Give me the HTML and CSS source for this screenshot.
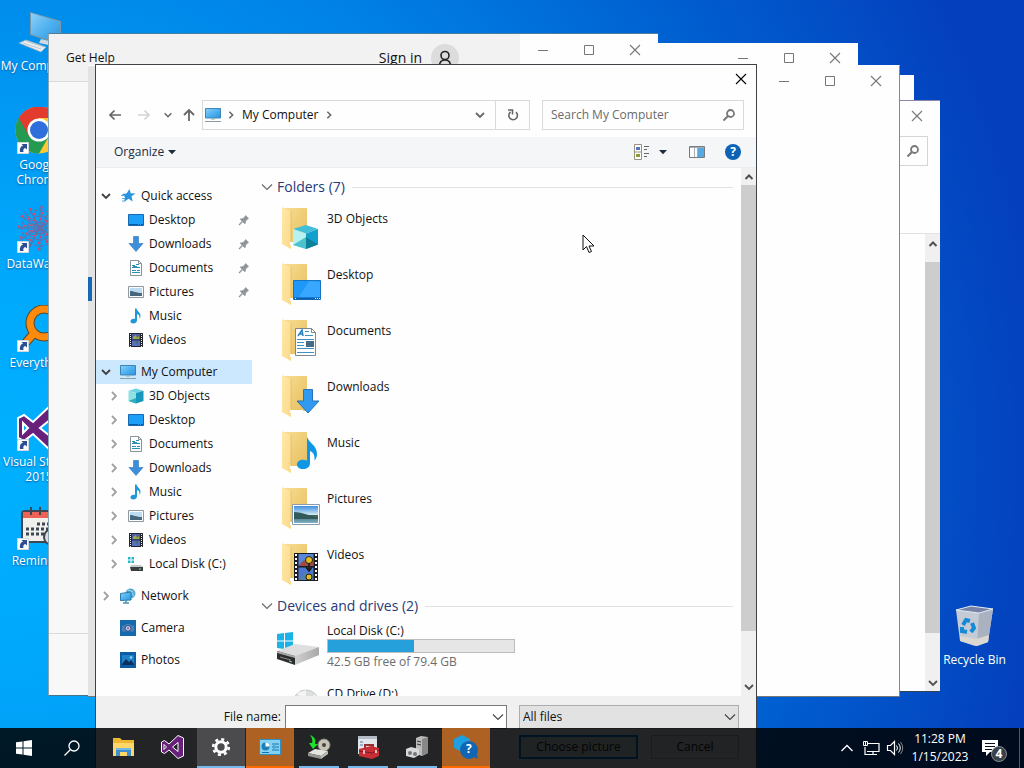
FILE: index.html
```html
<!DOCTYPE html>
<html lang="en">
<head>
<meta charset="utf-8">
<title>Desktop</title>
<link rel="stylesheet" href="styles.css">
</head>
<body>
<svg class="defs" aria-hidden="true">
  <defs>
    <linearGradient id="g-screen" x1="0" y1="0" x2="1" y2="1"><stop offset="0" stop-color="#8fd0f8"/><stop offset=".5" stop-color="#4fb2f0"/><stop offset="1" stop-color="#2c93dc"/></linearGradient>
    <linearGradient id="g-back" x1="0" y1="0" x2="1" y2="1"><stop offset="0" stop-color="#f8df92"/><stop offset="1" stop-color="#e6bd60"/></linearGradient>
    <linearGradient id="g-front" x1="0" y1="0" x2="1" y2="1"><stop offset="0" stop-color="#ffe9a8"/><stop offset="1" stop-color="#fbd98a"/></linearGradient>
    <linearGradient id="g-photo" x1="0" y1="0" x2="0" y2="1"><stop offset="0" stop-color="#3f8fdf"/><stop offset=".5" stop-color="#cfe7f5"/><stop offset=".55" stop-color="#3c6657"/><stop offset="1" stop-color="#7fb3cf"/></linearGradient>
    <linearGradient id="g-drive" x1="0" y1="0" x2="1" y2="0"><stop offset="0" stop-color="#cfcfcf"/><stop offset="1" stop-color="#a9a9a9"/></linearGradient>
  </defs>
  <symbol id="close" viewBox="0 0 12 12"><path d="M1 1l10 10M11 1L1 11" fill="none" stroke="currentColor" stroke-width="1.1"/></symbol>
  <symbol id="max" viewBox="0 0 12 12"><path d="M1.500 1.500h9v9h-9z" fill="none" stroke="currentColor"/></symbol>
  <symbol id="min" viewBox="0 0 12 12"><path d="M1 6.500h10" fill="none" stroke="currentColor"/></symbol>
  <symbol id="down" viewBox="0 0 12 12"><path d="M2 4l4 4 4-4" fill="none" stroke="currentColor" stroke-width="1.800"/></symbol>
  <symbol id="thin-down" viewBox="0 0 12 12"><path d="M1 3.500l5 5 5-5" fill="none" stroke="currentColor" stroke-width="1.100"/></symbol>
  <symbol id="up" viewBox="0 0 12 12"><path d="M2.500 8L6 4.500 9.500 8" fill="none" stroke="currentColor" stroke-width="2"/></symbol>
  <symbol id="right" viewBox="0 0 12 12"><path d="M4 2l4 4-4 4" fill="none" stroke="currentColor" stroke-width="1.800"/></symbol>
  <symbol id="caret" viewBox="0 0 12 12"><path d="M2 4h8L6 8.300z" fill="currentColor"/></symbol>
  <symbol id="arrow-l" viewBox="0 0 14 14"><path d="M13 7H2M6.500 2.500L2 7l4.500 4.500" fill="none" stroke="currentColor" stroke-width="1.700"/></symbol>
  <symbol id="arrow-r" viewBox="0 0 14 14"><path d="M1 7h11M7.500 2.500L12 7l-4.500 4.500" fill="none" stroke="currentColor" stroke-width="1.700"/></symbol>
  <symbol id="arrow-u" viewBox="0 0 14 14"><path d="M7 13V2M2 7l5-5 5 5" fill="none" stroke="currentColor" stroke-width="1.800"/></symbol>
  <symbol id="refresh" viewBox="0 0 14 14"><path d="M10 4.200A4.300 4.300 0 1 1 4.500 4" fill="none" stroke="currentColor" stroke-width="1.600"/><path d="M2 2h4.500v4.500" fill="none" stroke="currentColor" stroke-width="1.600"/></symbol>
  <symbol id="search" viewBox="0 0 14 14"><circle cx="8.500" cy="5.500" r="3.500" fill="none" stroke="currentColor" stroke-width="1.800"/><path d="M6 8l-4.500 4.500" stroke="currentColor" stroke-width="2"/></symbol>
  <symbol id="pin" viewBox="0 0 12 12"><path d="M7.500 1L11 4.500 9.800 5.200 8 7l-.3 2.500-1 .5L2 5.500l.6-1L5 4.200 6.800 2.300z" fill="#8f969d"/><path d="M4.500 7.500L1 11" stroke="#8f969d" stroke-width="1.200"/></symbol>

  <symbol id="pc" viewBox="0 0 16 16"><path d="M.5 1.500h15v9.500H.5z" fill="url(#g-screen)" stroke="#3a86ba"/><path d="M6 11.500h4v1H6z" fill="#8aa"/><path d="M0 14.500h16" stroke="#8b9aa5"/></symbol>
  <symbol id="star" viewBox="0 0 16 16"><path d="M9.500 1l1.200 4.200 4.800.3-4 2.800 1.200 5.200-4.200-2.800L4 14l1-4.700L2 6l4.500-.4z" fill="#2a93e0"/><path d="M1 7.500h4M2 10.500h3M2 13h3" stroke="#5aaee8"/></symbol>
  <symbol id="desk" viewBox="0 0 16 16"><path d="M.5 2.500h15v11H.5z" fill="#1fa0f8" stroke="#1669ab"/><path d="M1 12.500h14" stroke="#0a5ba5" stroke-dasharray="9 1 1 1"/></symbol>
  <symbol id="dl" viewBox="0 0 16 16"><path d="M5.500.5h5v7h4.500L8 15.500 1 7.500h4.500z" fill="#3c8fd8" stroke="#2c74b8" stroke-width=".6"/></symbol>
  <symbol id="doc" viewBox="0 0 16 16"><path d="M2.500.5h8l3 3v12h-11z" fill="#fff" stroke="#8b9299"/><path d="M4 5.500h3M8 4.500h3M4 7.500h8M4 10.500h4M9 10.500h3M4 12.500h8M5 6.500h4" stroke="#2e8fb5"/><path d="M10.500.5v3h3" fill="none" stroke="#8b9299"/></symbol>
  <symbol id="pic" viewBox="0 0 16 16"><path d="M.5 2.500h15v11H.5z" fill="#fff" stroke="#8d98a3"/><path d="M2 4h12v8H2z" fill="#bcdcf2"/><path d="M2 7c4 0 6 2 12 2v3H2z" fill="#48667e"/></symbol>
  <symbol id="music" viewBox="0 0 16 16"><path d="M7 .5h1.500c.5 3 4.500 4 4 8-.1 1-.6 1.800-1 2 .4-3-1-4-2.500-4.500V12c0 2-1.500 3.500-3.500 3.500S2.500 14.500 2.500 13.200c0-1.700 2-2.700 4.500-2.200z" fill="#1f97d8"/></symbol>
  <symbol id="video" viewBox="0 0 16 16"><path d="M1 1h14v14H1z" fill="#22252b"/><path d="M4 2h8v5.500H4z" fill="#4c62a8"/><path d="M4 8.500h8V14H4z" fill="#5870bd"/><path d="M5 5l3-2 1 3 2-2v3H5z" fill="#a3a944"/><path d="M7 10l3-1v4z" fill="#3d7358"/><path d="M2.500 2v13M13.500 2v13" stroke="#eee" stroke-dasharray="1 1"/></symbol>
  <symbol id="cube" viewBox="0 0 16 16"><path d="M8 .5l7.500 2.300L8 5 .5 2.800z" fill="#6ed3e2"/><path d="M.5 2.800L8 5v10.500L.5 13z" fill="#8fe0e0"/><path d="M8 5l7.500-2.200V13L8 15.500z" fill="#1697bd"/><path d="M.5 13L8 10v5.500z" fill="#2fadb8"/></symbol>
  <symbol id="disk" viewBox="0 0 16 16"><path d="M0 1h2.500v2.500H0zM3.500 1H6v2.500H3.500zM0 4.500h2.500V7H0zM3.500 4.500H6V7H3.500z" fill="#26b8c8"/><path d="M3 9h10l2 2H2z" fill="#c5c9cb"/><path d="M2 11h13v4H3z" fill="#3a3d40"/><path d="M11 13h2" stroke="#8ee08e"/></symbol>
  <symbol id="net" viewBox="0 0 16 16"><circle cx="10.500" cy="5.500" r="5" fill="#58a9d4"/><path d="M8 2l3 1 3 5M7 6l6-3" stroke="#a5d9ec" fill="none"/><path d="M.5 5.500L11 4v8L.5 12.500z" fill="url(#g-screen)" stroke="#257bab"/><path d="M3 15h6M6 12v3" stroke="#4c91b5" stroke-width="1.500"/></symbol>
  <symbol id="cam" viewBox="0 0 16 16"><path d="M0 0h16v16H0z" fill="#1769ae"/><path d="M2 5.500h3l1-1.500h4l1 1.500h3v6H2z" fill="#4f80b2"/><circle cx="8" cy="8.300" r="2.800" fill="#b9d4f1" stroke="#324a89"/><circle cx="8" cy="8.300" r="1" fill="#9b4c7b"/></symbol>
  <symbol id="photos" viewBox="0 0 16 16"><path d="M0 0h16v16H0z" fill="#0c5ca5"/><path d="M2 3h12v10H2z" fill="#1e82ca"/><path d="M2 12l4-5 3 3 2-2 3 4v1H2z" fill="#0b315b"/><circle cx="11" cy="5.500" r="1.300" fill="#92d4fa"/></symbol>

  <symbol id="folder" viewBox="0 0 48 48"><path d="M7 5h25v35H7z" fill="url(#g-back)"/><path d="M7 4l9 4v38l-9-5z" fill="url(#g-front)"/><path d="M16 8v32" stroke="#dfb65c" stroke-width=".7"/><path d="M15 39h13v3H15z" fill="#fff"/></symbol>
  <symbol id="o-cube" viewBox="0 0 48 48"><use href="#folder"/><path d="M31 22l12 4-12 4.500L18 26z" fill="#42bfd8"/><path d="M18 26l13 4.500V46l-13-4z" fill="#b8f2ee"/><path d="M31 30.500L43 26v15.500L31 46z" fill="#14a0cf"/><path d="M18 42l13-8v12z" fill="#4bc3cd"/><path d="M31 34l12 7.500L31 46z" fill="#0d8199"/></symbol>
  <symbol id="o-desk" viewBox="0 0 48 48"><use href="#folder"/><path d="M18.500 21.500h27v19h-27z" fill="#1e97f8" stroke="#1674c0"/><path d="M34 22l11 1v15H24z" fill="#38a7ff"/><path d="M19 39.500h26" stroke="#0d5fad" stroke-width="2"/><path d="M40 39.500h5M20 39.500h1" stroke="#fff" stroke-dasharray="1 1"/></symbol>
  <symbol id="o-doc" viewBox="0 0 48 48"><use href="#folder"/><path d="M20.500 13.500h16l4 4v23h-20z" fill="#fff" stroke="#7d8790"/><path d="M36.500 13.500v4h4" fill="none" stroke="#7d8790"/><path d="M23 21l4-6 1 6M24.500 19H28" stroke="#2a83c4" stroke-width="1.500" fill="none"/><path d="M30 16.500h4M30 20.500h8M22 24.500h17M22 27.500h7M22 30.500h7M22 33.500h17M22 37.500h17" stroke="#3f8fc2"/><path d="M31 26h8v6h-8z" fill="#456b87"/></symbol>
  <symbol id="o-dl" viewBox="0 0 48 48"><use href="#folder"/><path d="M28.500 18.500h9V30H44L33 42 22 30h6.500z" fill="#2f9af0" stroke="#2775ba"/></symbol>
  <symbol id="o-music" viewBox="0 0 48 48"><use href="#folder"/><path d="M32 10c2 6 10 8 10 17 0 3-1 5-2.500 6.500C40 28 38 25 35 24v12c0 4-3 6-7 6s-6-2-6-4.500c0-3.500 4.500-6 10-4z" fill="#0f97e4"/></symbol>
  <symbol id="o-pic" viewBox="0 0 48 48"><use href="#folder"/><path d="M17.500 21.500h27v20h-27z" fill="#fff" stroke="#8b9bab"/><path d="M19 23h24v17H19z" fill="url(#g-photo)"/><path d="M19 29c7 0 12 3 24 5v2H19z" fill="#325a5c"/></symbol>
  <symbol id="o-video" viewBox="0 0 48 48"><use href="#folder"/><path d="M19 14h24v28H19z" fill="#1c1d22"/><path d="M23.500 15h15v12h-15z" fill="#5a87de"/><path d="M23.500 28.500h15V41h-15z" fill="#4b76d2"/><path d="M24 26l5-5 4 3 5-5v8H24z" fill="#9e4a4a"/><path d="M24 40l6-7 4 4 4-3v7H24z" fill="#517fa6"/><circle cx="34" cy="21" r="3.500" fill="#e3be22" stroke="#26210c"/><circle cx="34" cy="38" r="3" fill="#e3be22" stroke="#26210c"/><path d="M34 24v8M31 28l3 4 3-4" stroke="#19190f" stroke-width="1.500" fill="none"/><path d="M21 15v27M41 15v27" stroke="#fff" stroke-width="2" stroke-dasharray="2 2"/></symbol>
  <symbol id="o-disk" viewBox="0 0 48 48"><path d="M2 11l7-1v7.500H2zM10 10l8-1v8.500h-8zM2 18.500h7V26l-7-1zM10 18.500h8V27l-8-1z" fill="#1bb2e8"/><path d="M2 28l18-7 24 3-23 9z" fill="#dedede"/><path d="M20 33l24-9v8l-24 10z" fill="url(#g-drive)"/><path d="M2 28l18 5v9L2 36z" fill="#2d2d2f"/><path d="M2 28l18 5v2L2 30z" fill="#a8a8a8"/><path d="M5 34l11 3" stroke="#888"/><path d="M14 38l3 1" stroke="#7fe08b"/></symbol>
  <symbol id="o-cd" viewBox="0 0 48 48"><circle cx="31" cy="17" r="13" fill="#dedfdf" stroke="#c4c7c7"/><path d="M31 17L22 7l9-3zM31 17l9-9 4 9z" fill="#f2f4f3"/><circle cx="31" cy="17" r="4" fill="#fff" stroke="#bbb"/></symbol>

  <symbol id="shortcut" viewBox="0 0 48 48"><path d="M2.500 35.500h11v11h-11z" fill="#fff" stroke="#cfd8df"/><path d="M5 45c-.5-4 1-6 3-6.300L6.500 37H12v5.500L10.300 41C8.500 41.200 8 43 8.500 45z" fill="#2c4f93"/></symbol>
  <symbol id="d-pc" viewBox="0 0 48 48"><path d="M15 4l31 9v24L15 27z" fill="#7a97aa"/><path d="M16 5l29 9v21L16 26z" fill="url(#g-screen)"/><path d="M26 31l12 3v4l-14-3z" fill="#cfd9df"/><path d="M4 35l7-3 20 7-5 5z" fill="#e7edf0" stroke="#9db0bb" stroke-width=".8"/><path d="M8 35l18 6M11 33l18 6" stroke="#a9bac5" stroke-width=".7"/></symbol>
  <symbol id="d-chrome" viewBox="0 0 48 48"><circle cx="24" cy="23" r="23.500" fill="#fcc934"/><path d="M24 23L3.700 11A23.500 23.500 0 0 0 24 46.500l10-17.500z" fill="#249a52"/><path d="M3.700 11A23.500 23.500 0 0 1 44.300 11H24v12l-10 6z" fill="#e33b2e"/><circle cx="24" cy="23" r="11.500" fill="#fff"/><circle cx="24" cy="23" r="9" fill="#2e6fdb"/><use href="#shortcut"/></symbol>
  <symbol id="d-data" viewBox="0 0 48 48"><g fill="none" stroke="#76649c"><circle cx="25" cy="22" r="6"/><circle cx="25" cy="22" r="12" stroke-dasharray="3 1"/><circle cx="25" cy="22" r="18" stroke-dasharray="4 2"/><path d="M5 10l40 24M5 34l40-24M25 0v45M3 22h44M14 2l22 40M36 2L14 42M8 5l34 34M42 5L8 39"/></g><g fill="none" stroke="#d4496c" stroke-width="2.500"><circle cx="25" cy="22" r="9" stroke-dasharray="2 4"/><circle cx="25" cy="22" r="15" stroke-dasharray="2 6"/><circle cx="25" cy="22" r="21" stroke-dasharray="2 9"/></g><use href="#shortcut"/></symbol>
  <symbol id="d-every" viewBox="0 0 48 48"><circle cx="29" cy="18" r="14" fill="none" stroke="#5c4a28" stroke-width="9"/><path d="M19 28L8 41" stroke="#5c4a28" stroke-width="9"/><circle cx="29" cy="18" r="14" fill="none" stroke="#ff8a0c" stroke-width="7"/><path d="M20 27L8 41" stroke="#ff8a0c" stroke-width="7"/><use href="#shortcut"/></symbol>
  <symbol id="vs" viewBox="0 0 48 48"><path fill-rule="evenodd" d="M36 1l11 5v36l-11 5-18-17-9 7-6-3V14l6-3 9 7zm0 14L25 24l11 9zM8 19v10l5-5z" fill="#68217a" stroke="#fff" stroke-width="2"/></symbol>
  <symbol id="d-vs" viewBox="0 0 48 48"><use href="#vs"/><use href="#shortcut"/></symbol>
  <symbol id="d-cal" viewBox="0 0 48 48"><rect x="7" y="8" width="38" height="31" rx="3" fill="#efefec" stroke="#3d4653" stroke-width="2"/><path d="M8 9h36v6H8z" fill="#ed6355"/><path d="M16 4v8M25 4v8M34 4v8" stroke="#3d4653" stroke-width="2"/><path d="M22 21h18M11 26h28M11 31h20" stroke="#3d4653" stroke-width="3" stroke-dasharray="3 2"/><circle cx="37" cy="34" r="8" fill="#ddd" stroke="#3d4653" stroke-width="2"/><use href="#shortcut"/></symbol>
  <symbol id="d-bin" viewBox="0 0 48 48"><path d="M5 8l23 3 14-4-5 33-13 4-15-5z" fill="#c5cbd5"/><path d="M28 11l14-4-5 33-11 4z" fill="#aab2c2"/><path d="M5 8l15-4 22 3-14 4z" fill="#7983a5" stroke="#e7edf4"/><path d="M9 34l16 3 13-4-1 7-11 4-17-5z" fill="#dbd8d2"/><g fill="none" stroke="#1689d7" stroke-width="4"><path d="M12 23l3-5 4 1M21 21l2 5-3 4M16 30l-5-1v-4"/></g></symbol>

  <symbol id="win" viewBox="0 0 16 16"><path d="M0 2.300L6.500 1.400v6.100H0zM7.500 1.200L16 0v7.500H7.500zM0 8.500h6.500v6.100L0 13.700zM7.500 8.500H16V16l-8.500-1.200z" fill="#fff"/></symbol>
  <symbol id="t-search" viewBox="0 0 16 16"><circle cx="10" cy="6" r="5" fill="none" stroke="#fff" stroke-width="1.300"/><path d="M6.500 9.500L.5 15.500" stroke="#fff" stroke-width="1.300"/></symbol>
  <symbol id="t-folder" viewBox="0 0 24 24"><path d="M2 3h7l2 2h12v16H2z" fill="#efb631"/><path d="M2 8h21v13H2z" fill="#ffd766"/><path d="M5 13h15v8h-4v-4H9v4H5z" fill="#3d8fd0"/><path d="M5 13h15v2H5z" fill="#74b7e5"/></symbol>
  <symbol id="t-gear" viewBox="0 0 24 24"><circle cx="12" cy="12" r="5.200" fill="none" stroke="#fff" stroke-width="3"/><circle cx="12" cy="12" r="7.800" fill="none" stroke="#fff" stroke-width="2.600" stroke-dasharray="3 3.126"/></symbol>
  <symbol id="t-panel" viewBox="0 0 24 24"><path d="M1.500 4.500h21v15h-21z" fill="#83d2f4" stroke="#318fc2"/><circle cx="7.500" cy="11.500" r="4" fill="#1f80b9"/><path d="M7.500 11.500v-4a4 4 0 0 1 4 4z" fill="#fff"/><path d="M14 9h7M14 12h7M14 15h7M4 17.500h7" stroke="#1a70a3"/><path d="M16 8v8" stroke="#4ca9da" stroke-width="2"/></symbol>
  <symbol id="t-install" viewBox="0 0 24 24"><circle cx="17" cy="10" r="6" fill="#c7c4b5" stroke="#85857c"/><circle cx="17" cy="10" r="2" fill="#44443b"/><path d="M1 18l7-4 13 2-7 5z" fill="#e5e5df"/><path d="M1 18l13 3v3L1 21z" fill="#989892"/><path d="M14 21l7-5v3l-7 5z" fill="#bdbdb6"/><path d="M3 0c5 2 6 5 5 9h3l-5 5-4-6h3c1-3 0-5-2-8z" fill="#1ee229"/></symbol>
  <symbol id="t-tool" viewBox="0 0 24 24"><path d="M2 1h19v18H2z" fill="#e3e6ea"/><path d="M2 1h19v3H2z" fill="#b4bdc7"/><path d="M4 7h3M4 10h3" stroke="#5d779e"/><path d="M9 13v-3h8v2" stroke="#943033" fill="none" stroke-width="2"/><path d="M3 14l12-3 8 2v8l-7 3-13-3z" fill="#c92e36"/><path d="M3 16l13 2 7-3" stroke="#7f1822" fill="none"/><path d="M8 15v4M20 15v3" stroke="#eee" stroke-width="1.500"/></symbol>
  <symbol id="t-dev" viewBox="0 0 24 24"><path d="M11 3l5-2 7 1v16l-6 3-6-2z" fill="#bcbcbc"/><path d="M17 4l6-2v16l-6 3z" fill="#888"/><path d="M12 6l4 1M12 9l4 1" stroke="#333"/><path d="M1 14l5-2 8 2v6l-5 3-8-2z" fill="#d9d9d9"/><circle cx="5" cy="18" r="2" fill="#777"/><circle cx="10" cy="19" r="2" fill="#777"/></symbol>
  <symbol id="t-help" viewBox="0 0 24 24"><path d="M8 0l8 4v9l-8 4-8-4V4z" fill="#1e9fe0"/><circle cx="15" cy="15" r="9" fill="#1166b3"/><path d="M18 21l6 3-2-7z" fill="#1166b3"/></symbol>
  <symbol id="t-net" viewBox="0 0 18 16"><path d="M5 3.500h12v8H5M11 11.500v3M7 14.500h8M3 7v7.500h4" fill="none" stroke="#fff" stroke-width="1.200"/><path d="M1.500 1.500h4v4h-4zM3.500 2v3" fill="none" stroke="#fff"/></symbol>
  <symbol id="t-vol" viewBox="0 0 18 16"><path d="M1.500 5.500h3l4-4v13l-4-4h-3z" fill="none" stroke="#fff" stroke-width="1.200"/><path d="M10.500 5.500q2 2.500 0 5M12.500 3.500q3.500 4.500 0 9" fill="none" stroke="#fff"/><path d="M14.500 2q4.500 6 0 12" fill="none" stroke="#888"/></symbol>
  <symbol id="t-note" viewBox="0 0 18 18"><path d="M1 1h16v12H9l-4 4v-4H1z" fill="#fff"/><path d="M4 4.500h10M4 7.500h10M4 10.500h7" stroke="#06101c" stroke-width="1.200"/></symbol>
</svg>

<main class="desktop">
  <div class="shortcuts">
    <a class="shortcut" href="#"><svg class="i48"><use href="#d-pc"/></svg><span>My Computer</span></a>
    <a class="shortcut" href="#"><svg class="i48"><use href="#d-chrome"/></svg><span>Google<br>Chrome</span></a>
    <a class="shortcut" href="#"><svg class="i48"><use href="#d-data"/></svg><span>DataWagon</span></a>
    <a class="shortcut" href="#"><svg class="i48"><use href="#d-every"/></svg><span>Everything</span></a>
    <a class="shortcut" href="#"><svg class="i48"><use href="#d-vs"/></svg><span>Visual Studio<br>2015</span></a>
    <a class="shortcut" href="#"><svg class="i48"><use href="#d-cal"/></svg><span>Reminder</span></a>
  </div>
  <a class="shortcut bin" href="#"><svg class="i48"><use href="#d-bin"/></svg><span>Recycle Bin</span></a>

  <section class="window win-back"></section>

  <section class="window win-search">
    <div class="caption"><button aria-label="Close"><svg class="i12"><use href="#close"/></svg></button></div>
    <div class="back-search"><span class="back-box"><svg class="i14"><use href="#search"/></svg></span></div>
    <div class="back-body"><div class="scroll"><svg class="i12"><use href="#up"/></svg><div class="track"><div class="thumb back-thumb"></div></div><svg class="i12"><use href="#down"/></svg></div></div>
  </section>

  <section class="window win-second">
    <div class="caption"><button aria-label="Minimize"><svg class="i12"><use href="#min"/></svg></button><button aria-label="Maximize"><svg class="i12"><use href="#max"/></svg></button><button aria-label="Close"><svg class="i12"><use href="#close"/></svg></button></div>
  </section>

  <section class="window win-help">
    <header class="help-head">
      <div class="help-title"><span>Get Help</span><span class="sign">Sign in <span class="avatar"><svg class="i16" viewBox="0 0 16 16"><circle cx="8" cy="5.500" r="4" fill="none" stroke="#222" stroke-width="1.600"/><path d="M2.500 16c0-4 2-6 5.500-6s5.500 2 5.500 6" fill="none" stroke="#222" stroke-width="1.600"/></svg></span></span></div>
      <div class="caption"><button aria-label="Minimize"><svg class="i12"><use href="#min"/></svg></button><button aria-label="Maximize"><svg class="i12"><use href="#max"/></svg></button><button aria-label="Close"><svg class="i12"><use href="#close"/></svg></button></div>
    </header>
    <div class="help-body"></div>
    <div class="help-foot"></div>
  </section>

  <section class="window win-settings">
    <div class="caption"><button aria-label="Minimize"><svg class="i12"><use href="#min"/></svg></button><button aria-label="Maximize"><svg class="i12"><use href="#max"/></svg></button><button aria-label="Close"><svg class="i12"><use href="#close"/></svg></button></div>
    <div class="rail"><div class="rail-mark"></div></div>
  </section>

  <section class="dialog">
    <div class="dialog-caption"><button aria-label="Close"><svg class="i12"><use href="#close"/></svg></button></div>
    <div class="address-row">
      <button aria-label="Back"><svg class="i14"><use href="#arrow-l"/></svg></button>
      <button class="off" aria-label="Forward" disabled><svg class="i14"><use href="#arrow-r"/></svg></button>
      <button class="recent" aria-label="Recent locations"><svg class="i10"><use href="#down"/></svg></button>
      <button class="up" aria-label="Up"><svg class="i14"><use href="#arrow-u"/></svg></button>
      <div class="address"><svg class="i16"><use href="#pc"/></svg><svg class="i10"><use href="#right"/></svg><a href="#">My Computer</a><svg class="i10"><use href="#right"/></svg><button class="drop" aria-label="Previous locations"><svg class="i12"><use href="#down"/></svg></button></div>
      <button class="refresh" aria-label="Refresh"><svg class="i14"><use href="#refresh"/></svg></button>
      <div class="search"><input type="search" aria-label="Search My Computer" placeholder="Search My Computer"><svg class="i14"><use href="#search"/></svg></div>
    </div>
    <div class="toolbar">
      <button class="organize">Organize<svg class="i12"><use href="#caret"/></svg></button>
      <button aria-label="Change your view"><svg class="i16" viewBox="0 0 16 16"><path d="M.5.500h7v15h-7zM0 8h8" fill="#fff" stroke="#9a927f"/><path d="M2 3h4v3H2z" fill="#5773c4"/><path d="M2 10h4v3H2z" fill="#8c9b30"/><path d="M10 2.500h5M10 5.500h3M10 9.500h5M10 12.500h3" stroke="#666"/></svg></button>
      <button class="more" aria-label="More options"><svg class="i12"><use href="#caret"/></svg></button>
      <button class="pane" aria-label="Preview pane"><svg class="i16" viewBox="0 0 16 16"><path d="M.5 2.500h15v11H.5z" fill="#fff" stroke="#747b82"/><path d="M9 4h6v9H9z" fill="#55a8e2"/><path d="M1 3.500h14M8.500 3v10M5.500 3v10" stroke="#a7adb2"/></svg></button>
      <button class="help" aria-label="Help">?</button>
    </div>
    <div class="content">
      <nav class="tree">
        <ul>
          <li><a href="#"><svg class="i12 tw open"><use href="#down"/></svg><svg class="i16"><use href="#star"/></svg>Quick access</a></li>
          <li><a class="sub flat" href="#"><svg class="i16"><use href="#desk"/></svg>Desktop<svg class="i12 pin"><use href="#pin"/></svg></a></li>
          <li><a class="sub flat" href="#"><svg class="i16"><use href="#dl"/></svg>Downloads<svg class="i12 pin"><use href="#pin"/></svg></a></li>
          <li><a class="sub flat" href="#"><svg class="i16"><use href="#doc"/></svg>Documents<svg class="i12 pin"><use href="#pin"/></svg></a></li>
          <li><a class="sub flat" href="#"><svg class="i16"><use href="#pic"/></svg>Pictures<svg class="i12 pin"><use href="#pin"/></svg></a></li>
          <li><a class="sub flat" href="#"><svg class="i16"><use href="#music"/></svg>Music</a></li>
          <li><a class="sub flat" href="#"><svg class="i16"><use href="#video"/></svg>Videos</a></li>
        </ul>
        <ul>
          <li><a class="current" href="#"><svg class="i12 tw open"><use href="#down"/></svg><svg class="i16"><use href="#pc"/></svg>My Computer</a></li>
          <li><a class="sub" href="#"><svg class="i12 tw"><use href="#right"/></svg><svg class="i16"><use href="#cube"/></svg>3D Objects</a></li>
          <li><a class="sub" href="#"><svg class="i12 tw"><use href="#right"/></svg><svg class="i16"><use href="#desk"/></svg>Desktop</a></li>
          <li><a class="sub" href="#"><svg class="i12 tw"><use href="#right"/></svg><svg class="i16"><use href="#doc"/></svg>Documents</a></li>
          <li><a class="sub" href="#"><svg class="i12 tw"><use href="#right"/></svg><svg class="i16"><use href="#dl"/></svg>Downloads</a></li>
          <li><a class="sub" href="#"><svg class="i12 tw"><use href="#right"/></svg><svg class="i16"><use href="#music"/></svg>Music</a></li>
          <li><a class="sub" href="#"><svg class="i12 tw"><use href="#right"/></svg><svg class="i16"><use href="#pic"/></svg>Pictures</a></li>
          <li><a class="sub" href="#"><svg class="i12 tw"><use href="#right"/></svg><svg class="i16"><use href="#video"/></svg>Videos</a></li>
          <li><a class="sub" href="#"><svg class="i12 tw"><use href="#right"/></svg><svg class="i16"><use href="#disk"/></svg>Local Disk (C:)</a></li>
        </ul>
        <ul><li><a href="#"><svg class="i12 tw"><use href="#right"/></svg><svg class="i16"><use href="#net"/></svg>Network</a></li></ul>
        <ul><li><a class="leaf" href="#"><svg class="i16"><use href="#cam"/></svg>Camera</a></li></ul>
        <ul><li><a class="leaf" href="#"><svg class="i16"><use href="#photos"/></svg>Photos</a></li></ul>
      </nav>
      <div class="files">
        <h2><svg class="i12"><use href="#thin-down"/></svg>Folders (7)</h2>
        <ul class="folders">
          <li><svg class="i48"><use href="#o-cube"/></svg><span>3D Objects</span></li>
          <li><svg class="i48"><use href="#o-desk"/></svg><span>Desktop</span></li>
          <li><svg class="i48"><use href="#o-doc"/></svg><span>Documents</span></li>
          <li><svg class="i48"><use href="#o-dl"/></svg><span>Downloads</span></li>
          <li><svg class="i48"><use href="#o-music"/></svg><span>Music</span></li>
          <li><svg class="i48"><use href="#o-pic"/></svg><span>Pictures</span></li>
          <li><svg class="i48"><use href="#o-video"/></svg><span>Videos</span></li>
        </ul>
        <h2><svg class="i12"><use href="#thin-down"/></svg>Devices and drives (2)</h2>
        <ul class="drives">
          <li><svg class="i48"><use href="#o-disk"/></svg><div class="drive"><span>Local Disk (C:)</span><div class="usage"><div class="used" style="width:46%"></div></div><span class="free">42.5 GB free of 79.4 GB</span></div></li>
          <li><svg class="i48"><use href="#o-cd"/></svg><div class="drive"><span>CD Drive (D:)</span></div></li>
        </ul>
      </div>
      <div class="scroll"><svg class="i12"><use href="#up"/></svg><div class="track"><div class="thumb"></div></div><svg class="i12"><use href="#down"/></svg></div>
    </div>
    <div class="dialog-foot">
      <label for="fname">File name:</label>
      <div class="combo"><input id="fname" type="text"><svg class="i12"><use href="#thin-down"/></svg></div>
      <div class="combo kind"><select aria-label="File type"><option>All files</option></select><svg class="i12"><use href="#thin-down"/></svg></div>
      <div class="actions"><button class="primary">Choose picture</button><button>Cancel</button></div>
    </div>
  </section>

  <svg class="cursor" viewBox="0 0 13 20"><path d="M1 1v15l3.500-3.500L7 18.500l2.500-1L7 12h5z" fill="#fff" stroke="#111"/></svg>
</main>

<footer class="taskbar">
  <button aria-label="Start"><svg class="i16"><use href="#win"/></svg></button>
  <button aria-label="Search"><svg class="i16"><use href="#t-search"/></svg></button>
  <div class="apps">
    <button aria-label="File Explorer"><svg class="i24"><use href="#t-folder"/></svg></button>
    <button aria-label="Visual Studio"><svg class="i24"><use href="#vs"/></svg></button>
    <button class="active" aria-label="Settings"><svg class="i24"><use href="#t-gear"/></svg></button>
    <button class="alert" aria-label="Control Panel"><svg class="i24"><use href="#t-panel"/></svg></button>
    <button class="run" aria-label="Installer"><svg class="i24"><use href="#t-install"/></svg></button>
    <button class="run" aria-label="Toolbox"><svg class="i24"><use href="#t-tool"/></svg></button>
    <button class="run" aria-label="Devices"><svg class="i24"><use href="#t-dev"/></svg></button>
    <button class="alert" aria-label="Get Help"><svg class="i24"><use href="#t-help"/></svg><span class="mark">?</span></button>
  </div>
  <div class="tray">
    <button aria-label="Show hidden icons"><svg class="i14" viewBox="0 0 14 14"><path d="M1.500 10L7 4.500l5.500 5.500" fill="none" stroke="#fff" stroke-width="1.300"/></svg></button>
    <button aria-label="Network"><svg class="i18"><use href="#t-net"/></svg></button>
    <button aria-label="Volume"><svg class="i18"><use href="#t-vol"/></svg></button>
    <div class="clock"><span>11:28 PM</span><span>1/15/2023</span></div>
    <button class="notes" aria-label="Notifications"><svg class="i18"><use href="#t-note"/></svg><span class="count">4</span></button>
  </div>
</footer>
</body>
</html>
```

FILE: styles.css
```css
* { box-sizing: border-box; }
body { margin: 0; height: 100vh; overflow: hidden; position: relative; font: 12px/16px "Open Sans", "Noto Sans", sans-serif; color: #111; }
button { font: inherit; color: inherit; border: 0; padding: 0; background: none; display: flex; align-items: center; justify-content: center; }
input, select { font: inherit; color: inherit; min-width: 0; }
a { color: inherit; text-decoration: none; }
ul { list-style: none; margin: 0; padding: 0; }
svg { flex: none; display: block; }
.defs { position: absolute; width: 0; height: 0; }
.i10 { width: 10px; height: 10px; }
.i12 { width: 12px; height: 12px; }
.i14 { width: 14px; height: 14px; }
.i16 { width: 16px; height: 16px; }
.i18 { width: 18px; height: 18px; }
.i24 { width: 24px; height: 24px; }
.i48 { width: 48px; height: 48px; }

.desktop { position: absolute; inset: 0; overflow: hidden; background: radial-gradient(ellipse 104% 140% at 0 60%, #00b0ff 0, #00a7fb 20%, #0082e6 52%, #005fd0 76%, #0440bd 98%); }
.shortcuts { display: flex; flex-direction: column; width: 78px; padding-top: 8px; }
.shortcut { display: flex; flex-direction: column; align-items: center; gap: 2px; height: 99px; color: #fff; line-height: 15px; text-align: center; white-space: nowrap; text-shadow: 0 1px 2px #0058a0; }
.bin { position: absolute; right: 12px; top: 602px; width: 75px; }

.window, .dialog { position: absolute; display: flex; flex-direction: column; background: #fefefe; border: 1px solid #6f767d; }
.window { border-right: 0; }
.caption { display: flex; justify-content: flex-end; flex: none; height: 30px; color: #777; }
.caption button { width: 46px; }
.win-back { left: 200px; top: 75px; width: 714px; height: 400px; border-color: #fefefe; }
.win-search { left: 300px; top: 100px; width: 640px; height: 592px; border-color: #88a #fefefe #345; }
.back-search { display: flex; justify-content: flex-end; padding: 5px 12px 0; height: 102px; }
.back-box { display: flex; align-items: center; justify-content: flex-end; width: 200px; height: 30px; padding-right: 7px; border: 1px solid #d5d5d5; color: #777; }
.back-body { flex: 1; display: flex; justify-content: flex-end; border-top: 1px solid #e2e2e2; }
.win-second { left: 300px; top: 43px; width: 558px; height: 400px; border-color: #fefefe; }
.win-second .caption { height: 28px; }
.win-help { left: 48px; top: 33px; width: 610px; height: 663px; background: #f8f8f8; border-color: #4b7d9c #fefefe #49768f #8ca5b2; }
.help-head { display: flex; height: 48px; background: #f2f2f2; border-bottom: 1px solid #d9d9d9; }
.help-title { flex: 1; display: flex; justify-content: space-between; align-items: center; padding: 0 61px 0 17px; }
.sign { display: flex; align-items: center; gap: 9px; font-size: 14px; }
.avatar { display: grid; place-items: center; width: 28px; height: 28px; border-radius: 50%; background: #dcdcdc; }
.win-help .caption { width: 138px; height: 47px; padding-bottom: 16px; background: #fefefe; }
.help-body { flex: 1; }
.help-foot { height: 62px; border-top: 1px solid #d9d9d9; }
.win-settings { left: 88px; top: 65px; width: 812px; height: 632px; border: 0; border-top: 1px solid #fefefe; border-right: 1px solid #888; border-bottom: 1px solid #777; background: linear-gradient(90deg, #e3e3e3 8px, #fefefe 8px); }
.rail { flex: 1; padding-top: 181px; }
.rail-mark { width: 4px; height: 24px; background: #1767b2; }

.dialog { left: 95px; top: 64px; width: 662px; height: 720px; border-color: #3f4347; }
.dialog-caption { display: flex; justify-content: flex-end; flex: none; height: 30px; }
.dialog-caption button { width: 30px; height: 28px; color: #000; }
.address-row { display: flex; flex: none; height: 42px; padding: 5px 12px 7px 4px; color: #666; }
.address-row > button { width: 30px; margin-right: -1px; }
.address-row .off { color: #d4d4d4; }
.address-row .recent { width: 20px; }
.address-row .up { width: 24px; margin-right: 1px; }
.address { flex: 1; display: flex; align-items: center; gap: 5px; border: 1px solid #d9d9d9; padding-left: 2px; }
.address a { color: #111; padding: 0 1px; }
.drop { margin-left: auto; width: 30px; height: 28px; }
.address-row .refresh { width: 34px; margin-right: 12px; border: 1px solid #d9d9d9; border-left: 0; }
.search { display: flex; align-items: center; width: 202px; border: 1px solid #d9d9d9; padding: 0 7px 0 8px; color: #777; }
.search input { flex: 1; border: 0; padding: 0; outline: 0; background: none; appearance: none; }
.search input::placeholder { color: #6b6b6b; opacity: 1; }
.toolbar { display: flex; align-items: center; flex: none; height: 31px; padding: 0 15px 0 18px; background: #f4f6f8; border-bottom: 1px solid #eaedf0; color: #1e2b3c; }
.organize { gap: 2px; margin-right: auto; }
.more { margin: 0 20px 0 7px; }
.help { width: 16px; height: 16px; margin-left: 20px; border-radius: 50%; background: #0c62b5; color: #fff; font-weight: 700; }

.content { flex: none; height: 528px; display: flex; overflow: hidden; }
.tree { width: 156px; padding-top: 16px; flex: none; }
.tree ul { margin-bottom: 8px; }
.tree a { display: flex; align-items: center; gap: 4px; height: 24px; padding-left: 4px; }
.tree .i16 { margin: 0 1px 0 4px; }
.tree .sub { padding-left: 12px; }
.tree .flat { padding-left: 28px; }
.tree .leaf { padding-left: 20px; }
.tree .current { background: #cce8ff; }
.tw { color: #a0a0a0; }
.tw.open { color: #404040; }
.pin { margin: 0 2px 0 auto; }
.files { flex: 1; min-width: 0; padding: 8px 8px 0 9px; }
.files h2 { display: flex; align-items: center; gap: 4px; margin: 0; height: 22px; font-size: 14px; font-weight: 400; color: #293a78; white-space: nowrap; }
.files h2::after { content: ""; flex: 1; height: 1px; margin-left: 3px; background: #e2e2e2; }
.files h2 svg { color: #666; }
.folders { padding: 5px 0 0; }
.folders li { display: flex; gap: 4px; height: 56px; padding-left: 14px; }
.folders span { padding-top: 8px; }
.drives li { display: flex; gap: 4px; height: 63px; padding: 6px 0 0 14px; }
.drive { width: 188px; }
.drive span { display: block; height: 16px; line-height: 16px; }
.usage { height: 14px; margin-bottom: 1px; border: 1px solid #bcbcbc; background: #e6e6e6; }
.used { height: 12px; background: #26a0da; }
.drive .free { color: #6d6d6d; }
.scroll { width: 15px; flex: none; display: flex; flex-direction: column; align-items: center; background: #f0f0f0; color: #505050; padding: 3px 0; }
.track { flex: 1; width: 100%; padding-top: 2px; }
.thumb { height: 446px; background: #cdcdcd; }
.back-body .scroll { padding: 4px 0 2px; }
.back-body .track { padding-top: 12px; }
.back-thumb { height: 371px; }
.dialog-foot { flex: 1; display: grid; grid-template-columns: 185px 222px 1fr; column-gap: 4px; grid-template-rows: 24px 24px; row-gap: 6px; padding: 9px 17px 0 0; background: #f0f0f0; }
.dialog-foot label { text-align: right; line-height: 24px; }
.combo { position: relative; display: flex; }
.combo input { width: 100%; border: 1px solid #7a7a7a; background: #fff; }
.combo select { width: 100%; appearance: none; border: 1px solid #adadad; border-radius: 0; padding: 0 3px; background: #e2e2e2; }
.combo svg { position: absolute; right: 3px; top: 6px; color: #444; pointer-events: none; }
.kind { margin-left: 8px; }
.actions { grid-column: 3; display: flex; justify-content: space-between; padding-left: 8px; }
.actions button { width: 88px; border: 1px solid #adadad; background: #e5e5e5; }
.actions .primary { width: 119px; border: 2px solid #0078d7; background: #e1e5e9; }
.cursor { position: absolute; left: 582px; top: 234px; width: 13px; height: 20px; }

.taskbar { position: absolute; left: 0; right: 0; bottom: 0; height: 40px; display: flex; background: rgba(0, 2, 4, .86); color: #fff; }
.taskbar > button { width: 48px; }
.apps { display: flex; gap: 1px; margin-left: 3px; }
.apps button { position: relative; width: 48px; border-bottom: 2px solid transparent; }
.apps .active { background: #4b4b4d; border-color: #76b9ed; }
.apps .alert { background: #ad6122; border-color: #ff6a00; }
.apps .run::after { content: ""; position: absolute; left: 4px; right: 4px; bottom: -2px; height: 2px; background: #76b9ed; }
.mark { position: absolute; left: 24px; top: 13px; font-weight: 700; }
.tray { margin-left: auto; display: flex; align-items: center; padding-right: 4px; }
.tray button { width: 24px; height: 40px; }
.clock { display: flex; flex-direction: column; gap: 2px; width: 66px; text-align: center; }
.tray .notes { position: relative; width: 47px; padding-right: 12px; border-right: 1px solid #4c5967; }
.count { position: absolute; left: 18px; top: 18px; width: 16px; height: 16px; border-radius: 50%; background: #3b4149; border: 1px solid #858b91; line-height: 14px; font-weight: 700; text-align: center; }
```
